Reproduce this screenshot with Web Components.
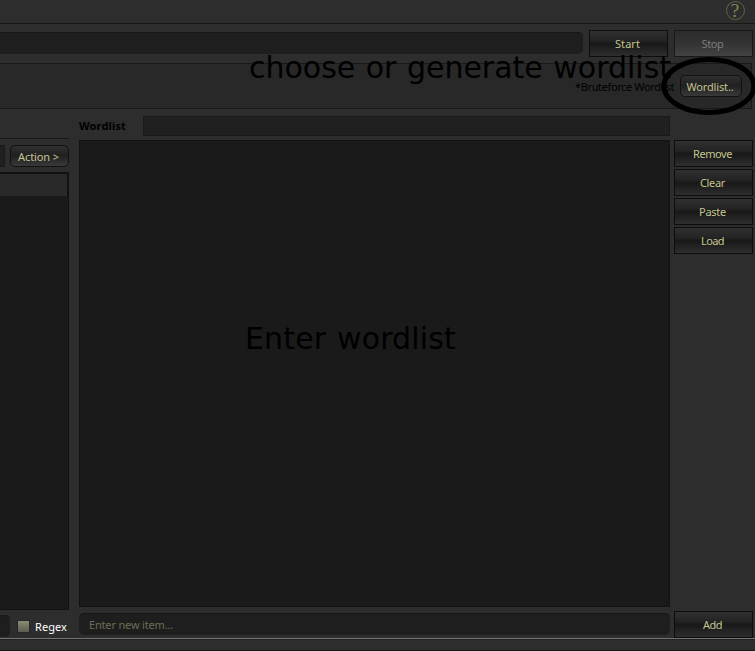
<!DOCTYPE html>
<html lang="en"><head><meta charset="utf-8"><title>Wordlist</title>
<style>
html,body{margin:0;height:100%;background:#2d2d2d;overflow:hidden}
body{font:11px "Noto Sans","DejaVu Sans",sans-serif}
</style></head><body>
<script>
const define=(name,html,setup)=>{
  const t=document.createElement('template');t.innerHTML=html;
  customElements.define(name,class extends HTMLElement{
    constructor(){super();this.attachShadow({mode:'open'}).append(t.content.cloneNode(true));}
    connectedCallback(){if(setup)setup(this);}
  });
};
// Text whose letter-spacing is adjusted so that it spans the width given in "w".
define('fit-text',`<style>:host{display:inline-block;white-space:pre}span{display:block;width:max-content;padding-bottom:2px}</style><span><slot></slot></span>`,el=>{
  const s=el.shadowRoot.querySelector('span'),n=el.textContent.length,w=+el.getAttribute('w');
  s.style.letterSpacing=((w-s.getBoundingClientRect().width)/n)+'px';
});
define('push-button',`<style>
:host{display:flex;align-items:center;justify-content:center;box-sizing:border-box;width:79px;height:27px;border:1px solid #0d0d0d;background:linear-gradient(#303030,#242424 38%,#191919 50%,#1c1c1c 60%,#2e2e2e);color:#c4c491;line-height:13px;padding:1px 2px 0 0}
:host([disabled]){background:linear-gradient(#2c2c2c,#333 50%,#424242);color:#7c7c7c;border-color:#191919}
:host([round]){border-radius:5px;height:22px;border-color:#111;padding-top:2px;background:linear-gradient(#303030,#202020 48%,#262626 60%,#393939)}
</style><slot></slot>`);
define('text-field',`<style>
:host{display:flex;align-items:center;box-sizing:border-box;height:22px;background:#1e1e1e;border-top:1px solid #161616;border-radius:var(--r,5px);color:#6d6d52;padding:1px 0 0 10px;line-height:13px}
:host([square]){border:1px solid #191919;--r:0;background:#202020}
</style><slot></slot>`);
define('check-box',`<style>:host{display:flex;align-items:center;gap:5px;color:#fff;line-height:13px}
i{box-sizing:border-box;width:13px;height:13px;border:1px solid #252525;background:linear-gradient(#8c8c70,#5b5b52)}
slot{display:block;padding-top:2px}</style><i></i><slot></slot>`);
define('help-icon',`<style>:host{display:block;width:20px;height:20px;font:19px/20px "Liberation Serif",serif;color:#85855a;text-align:center;box-sizing:border-box;position:relative}
svg{position:absolute;inset:0}</style><svg width="20" height="20"><circle cx="10.5" cy="9.5" r="9" fill="none" stroke="#606045"/></svg><slot></slot>`);
define('side-list',`<style>:host{display:block;box-sizing:border-box;background:#1a1a1a;border-top:2px solid #111;border-right:1px solid #121212;border-bottom:1px solid #121212}
div{height:22px;background:#292929;border-right:1px solid #111}</style><div></div>`);
define('word-area',`<style>:host{display:block;box-sizing:border-box;background:#1a1a1a;border:1px solid #131313}</style>`);
define('wordlist-app',`<style>
:host{display:block;width:755px;height:651px;background:#2d2d2d;position:relative;overflow:hidden}
header{height:24px;box-sizing:border-box;border-bottom:1px solid #181818;display:flex;justify-content:flex-end;padding:1px 10px 0 0}
.run{display:flex;gap:6px;padding:6px 2px 0 0;height:39px;box-sizing:border-box}
.run text-field{flex:1;margin-top:2px;border-top-left-radius:0;border-bottom-left-radius:0}
.opts{height:46px;box-sizing:border-box;margin-right:3px;background:#282828;border:1px solid #191919;border-left:0;display:flex;align-items:center;justify-content:flex-end;gap:6px;padding-right:9px;color:#000}
.opts>fit-text{line-height:13px;padding-top:2px}
.opts push-button{width:62px}
.main{display:grid;grid-template-columns:69px 591px 79px;column-gap:10px;height:529px}
.left{display:flex;flex-direction:column}
.rule{height:29px;border-bottom:1px solid #191919}
.act{display:flex;margin-top:6px;gap:5px}
.act text-field{width:5px;padding:0;border-left:0}
.act push-button{width:59px}
side-list{height:438px;margin-top:5px}
.rx{display:flex;gap:7px;margin-top:5px}
.rx text-field{width:10px;padding:0;border-radius:0 5px 5px 0}
.rx check-box{margin-top:1px}
.mid{display:flex;flex-direction:column}
.name{display:flex;padding-top:7px;height:31px;box-sizing:border-box;color:#000;font-weight:bold}
.name fit-text{width:64px;margin-top:3px;line-height:13px}
.name text-field{flex:1;height:20px}
word-area{height:467px}
.mid>text-field{margin-top:6px}
.right{margin-left:-6px;display:flex;flex-direction:column;gap:2px;padding-top:31px;width:79px;height:498px}
.right push-button:last-child{margin-top:auto}
footer{height:13px;box-sizing:border-box;border-top:1px solid #737373;border-bottom:1px solid #171717}
footer::before{content:"";display:block;height:1px;background:#222}
.note{position:absolute;color:#000;font:30px/36px "DejaVu Sans",sans-serif;word-spacing:1px}
svg.ring{position:absolute;left:655px;top:50px}
</style>
<header><help-icon>?</help-icon></header>
<div class="run"><text-field></text-field><push-button><fit-text w="25">Start</fit-text></push-button><push-button disabled><fit-text w="22">Stop</fit-text></push-button></div>
<div class="opts"><fit-text w="99">*Bruteforce Wordlist</fit-text><push-button round><fit-text w="47">Wordlist..</fit-text></push-button></div>
<div class="main">
<div class="left"><div class="rule"></div><div class="act"><text-field square></text-field><push-button round><fit-text w="41">Action &gt;</fit-text></push-button></div><side-list></side-list>
<div class="rx"><text-field></text-field><check-box><fit-text w="32">Regex</fit-text></check-box></div></div>
<div class="mid"><div class="name"><fit-text w="47">Wordlist</fit-text><text-field square></text-field></div><word-area></word-area><text-field><fit-text w="84">Enter new item...</fit-text></text-field></div>
<div class="right"><push-button><fit-text w="39">Remove</fit-text></push-button><push-button><fit-text w="25">Clear</fit-text></push-button><push-button><fit-text w="27">Paste</fit-text></push-button><push-button><fit-text w="23">Load</fit-text></push-button><push-button><fit-text w="19">Add</fit-text></push-button></div>
</div>
<footer></footer>
<fit-text class="note" w="422" style="left:249px;top:50px">choose or generate wordlist</fit-text>
<fit-text class="note" w="211" style="left:245px;top:321px">Enter wordlist</fit-text>
<svg class="ring" width="100" height="70"><ellipse cx="54" cy="36" rx="45" ry="26.5" fill="none" stroke="#000" stroke-width="5"/></svg>
`);
</script>
<wordlist-app></wordlist-app>
</body></html>
